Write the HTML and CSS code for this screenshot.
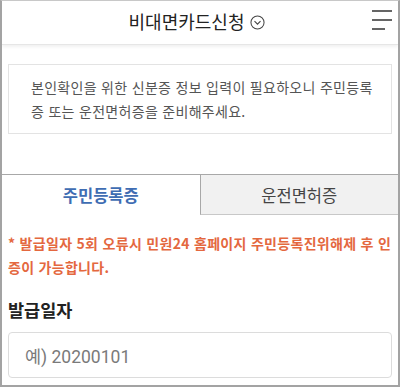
FILE: index.html
```html
<!DOCTYPE html>
<html lang="ko">
<head>
<meta charset="utf-8">
<link rel="stylesheet" href="styles.css">
</head>
<body>
<div class="frame">
  <header class="header">
    <div class="title">비대면카드신청
      <svg class="chev" width="15" height="15" viewBox="0 0 16 16"><circle cx="8" cy="8" r="7" fill="none" stroke="#444" stroke-width="1.1"/><path d="M4.8 6.6 L8 9.8 L11.2 6.6" fill="none" stroke="#444" stroke-width="1.2"/></svg>
    </div>
    <svg class="menu" width="22" height="24" viewBox="0 0 22 24"><path d="M1 3H21M1 12H21M1 21H14" stroke="#333" stroke-width="1.6"/></svg>
  </header>
  <main class="content">
    <div class="notice">본인확인을 위한 신분증 정보 입력이 필요하오니 주민등록증 또는 운전면허증을 준비해주세요.</div>
    <div class="tabs">
      <div class="tab active">주민등록증</div>
      <div class="tab">운전면허증</div>
    </div>
    <p class="warn">* 발급일자 5회 오류시 민원24 홈페이지 주민등록진위해제 후 인증이 가능합니다.</p>
    <h3 class="label">발급일자</h3>
    <div class="input">예) 20200101</div>
  </main>
</div>
</body>
</html>
```
FILE: styles.css
```css
html, body { margin: 0; padding: 0; }
body {
  font-family: "Noto Sans CJK KR", "Noto Sans", sans-serif;
  background: #fff;
  width: 400px;
  height: 387px;
  overflow: hidden;
}
.frame {
  box-sizing: border-box;
  width: 400px;
  height: 387px;
  border: 2px solid #a3a3a3;
  border-top: 1px solid #c8c8c8;
  overflow: hidden;
}
.header {
  position: relative;
  height: 43px;
  display: flex;
  align-items: center;
  justify-content: center;
  border-bottom: 1px solid #e6e6e6;
  box-shadow: 0 2px 3px rgba(0,0,0,0.06);
}
.title {
  display: flex;
  align-items: center;
  gap: 6px;
  font-size: 18px;
  color: #222;
  margin-left: -6px;
  margin-top: -3px;
}
.chev { margin-top: 2px; }
.menu { position: absolute; right: 5px; top: 7px; }
.content { padding: 19px 6px 0; }
.notice {
  border: 1px solid #e3e3e3;
  padding: 10px 12px 8px 22px;
  font-size: 14px;
  line-height: 24px;
  letter-spacing: 0.3px;
  word-break: break-all;
  color: #555;
  height: 50px;
}
.tabs {
  display: flex;
  margin: 40px -6px 0;
  border-top: 1px solid #a8a8a8;
}
.tab {
  flex: 1;
  height: 39px;
  display: flex;
  align-items: center;
  justify-content: center;
  font-size: 16.5px;
  color: #444;
  background: #f1f1f1;
  border-left: 1px solid #a8a8a8;
  border-bottom: 1px solid #c8c8c8;
}
.tab.active {
  background: #fff;
  color: #3f6db3;
  font-weight: 700;
  border-left: none;
  border-bottom: none;
}
.warn {
  margin: 16px 0 0;
  font-size: 14px;
  line-height: 24px;
  color: #e4683f;
  font-weight: 700;
  letter-spacing: 0.3px;
  word-break: break-all;
}
.label {
  margin: 18px 0 0;
  font-size: 17.5px;
  font-weight: 700;
  color: #222;
  line-height: 26px;
}
.input {
  margin-top: 9px;
  height: 46px;
  border: 1px solid #dcdcdc;
  border-radius: 4px;
  box-sizing: border-box;
  display: flex;
  align-items: center;
  padding-left: 16px;
  font-size: 17.5px;
  color: #7a7a7a;
  font-family: Roboto, "Noto Sans CJK KR", sans-serif;
}
```
